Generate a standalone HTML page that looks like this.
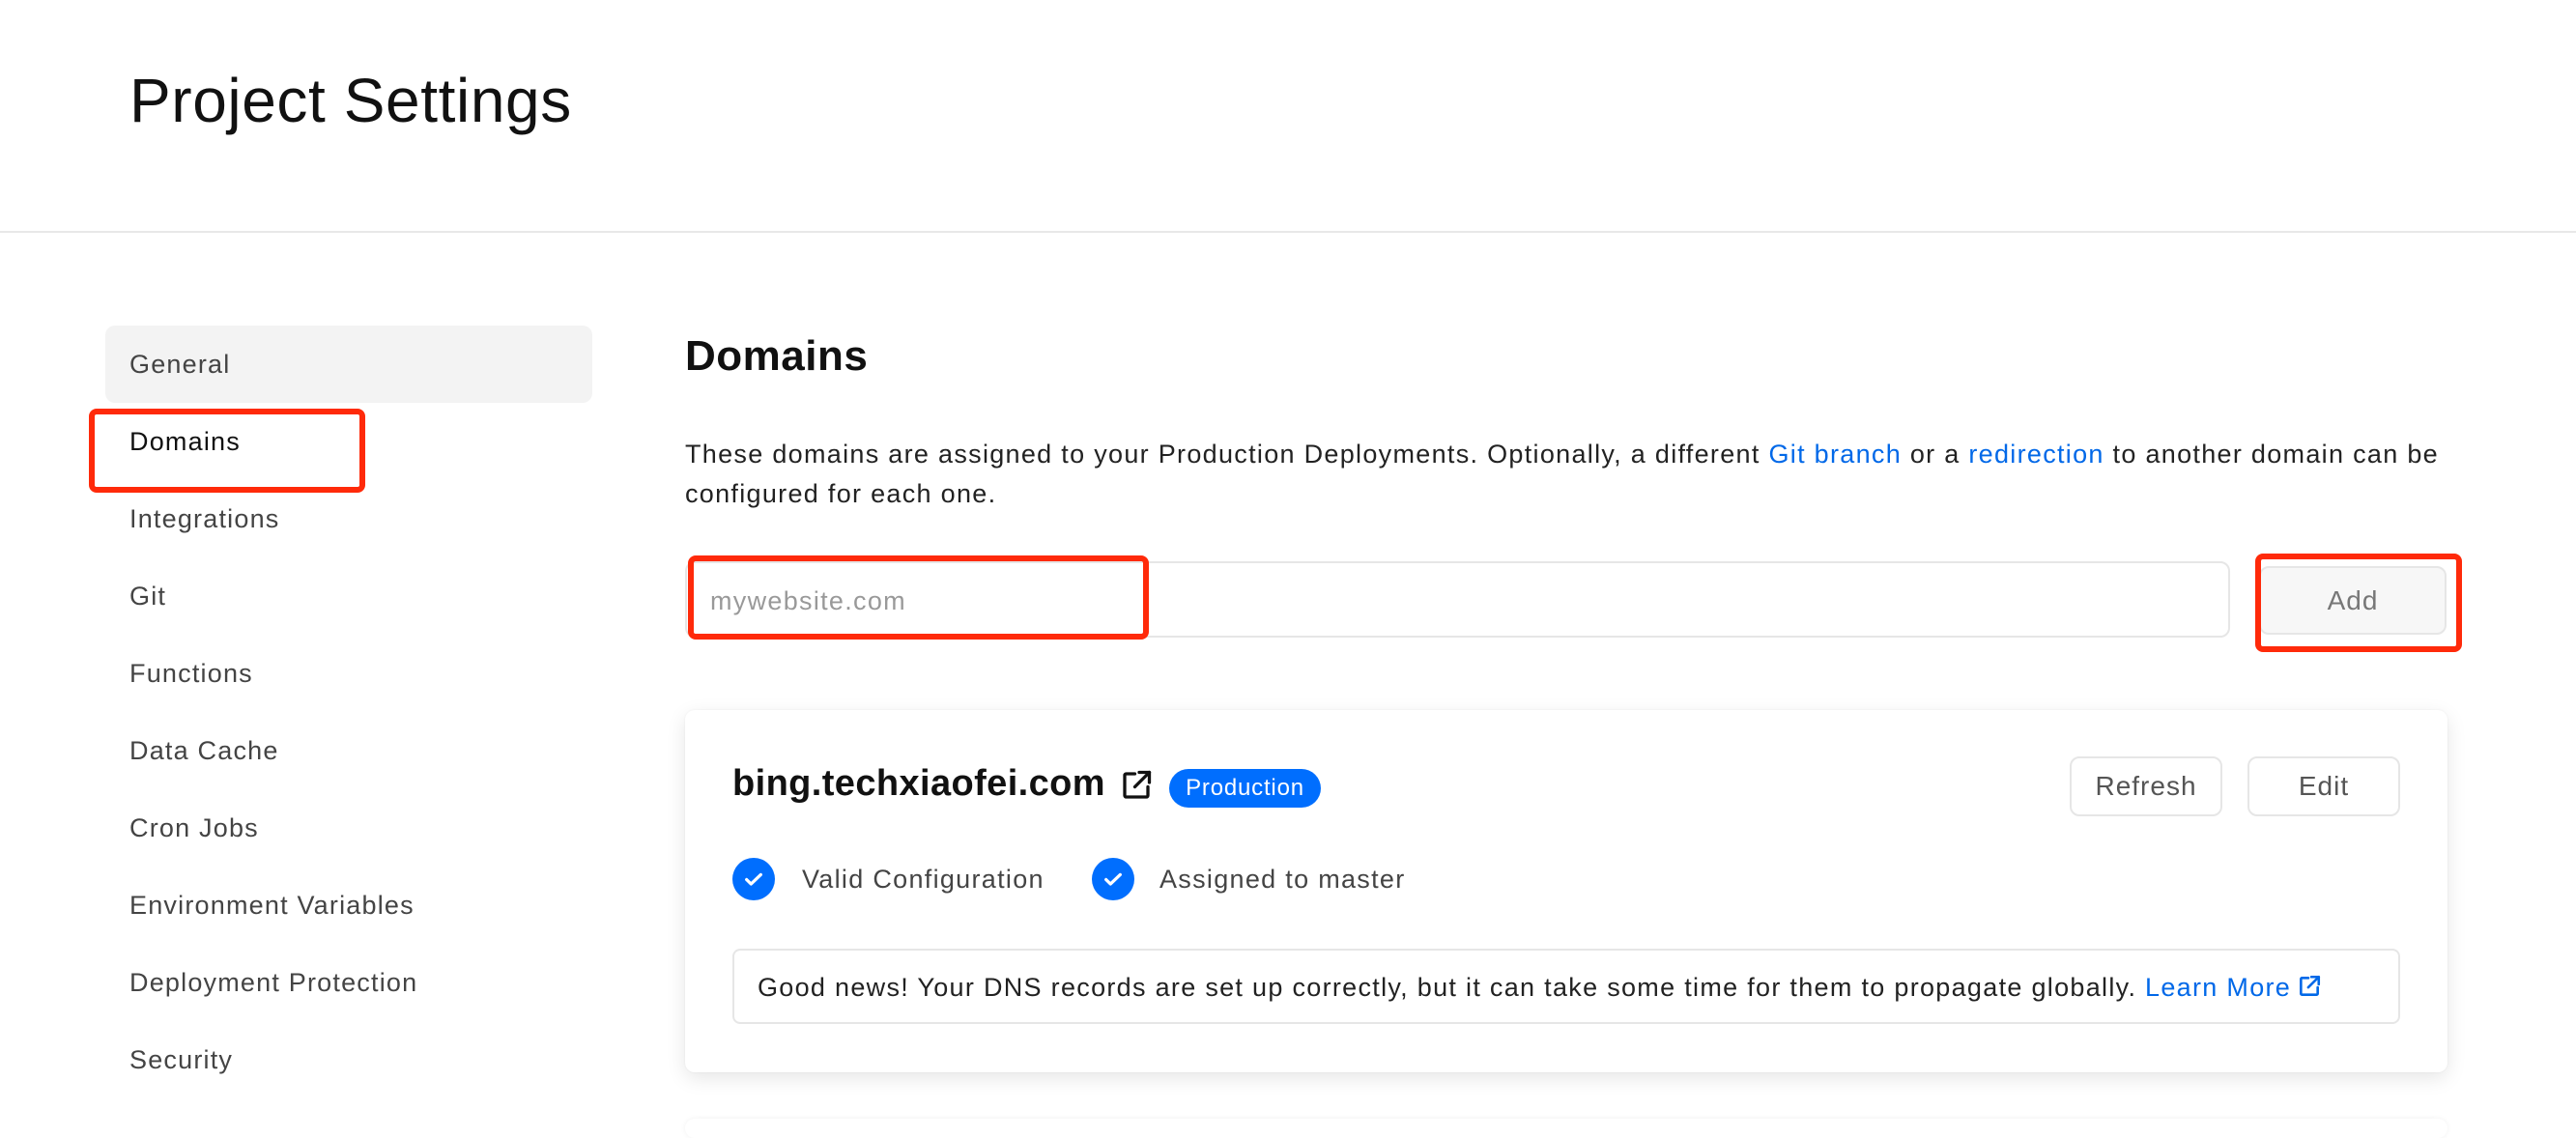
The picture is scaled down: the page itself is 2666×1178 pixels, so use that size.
<!DOCTYPE html>
<html><head><meta charset="utf-8"><style>
*{box-sizing:border-box;margin:0;padding:0}
body{width:2666px;height:1162px;overflow:hidden;background:#fff;font-family:"Liberation Sans",sans-serif;position:relative;color:#111}
.a{position:absolute}
.nav{left:134px;font-size:27px;color:#444;line-height:40px;letter-spacing:1.2px}
.red{border:6px solid #ff2a0a;border-radius:8px}
.btn{border:2px solid #e6e6e6;border-radius:10px;background:#fff;font-size:28px;color:#555;display:flex;align-items:center;justify-content:center;letter-spacing:1px}
.chk{width:44px;height:44px;border-radius:50%;background:#006efe;display:flex;align-items:center;justify-content:center}
.blue{color:#0068e8}
.t{font-size:27px;letter-spacing:1.3px;line-height:40px}
</style></head><body>
<div class="a" style="left:134px;top:66px;font-size:64px;color:#111;line-height:76px;letter-spacing:0.6px">Project Settings</div>
<div class="a" style="left:0;top:239px;width:2666px;height:2px;background:#e8e8e8"></div>

<div class="a" style="left:109px;top:337px;width:504px;height:80px;background:#f3f3f3;border-radius:10px"></div>
<div class="a nav" style="top:357px">General</div>
<div class="a nav" style="top:437px;color:#111">Domains</div>
<div class="a red" style="left:92px;top:423px;width:286px;height:87px"></div>
<div class="a nav" style="top:517px">Integrations</div>
<div class="a nav" style="top:597px">Git</div>
<div class="a nav" style="top:677px">Functions</div>
<div class="a nav" style="top:757px">Data Cache</div>
<div class="a nav" style="top:837px">Cron Jobs</div>
<div class="a nav" style="top:917px">Environment Variables</div>
<div class="a nav" style="top:997px">Deployment Protection</div>
<div class="a nav" style="top:1077px">Security</div>

<div class="a" style="left:709px;top:342px;font-size:44px;font-weight:bold;line-height:54px;letter-spacing:0.5px">Domains</div>
<div class="a t" style="left:709px;top:450px;width:1900px;line-height:41px;color:#222;white-space:nowrap">These domains are assigned to your Production Deployments. Optionally, a different <span class="blue">Git branch</span> or a <span class="blue">redirection</span> to another domain can be<br>configured for each one.</div>

<div class="a" style="left:709px;top:581px;width:1599px;height:79px;border:2px solid #e6e6e6;border-radius:10px"></div>
<div class="a t" style="left:735px;top:602px;color:#999">mywebsite.com</div>
<div class="a red" style="left:712px;top:575px;width:477px;height:87px"></div>
<div class="a btn" style="left:2338px;top:586px;width:194px;height:71px;background:#f7f7f7;color:#777">Add</div>
<div class="a red" style="left:2334px;top:573px;width:214px;height:102px"></div>

<div class="a" style="left:709px;top:735px;width:1824px;height:375px;border-radius:10px;background:#fff;box-shadow:0 6px 20px rgba(0,0,0,0.10),0 0 2px rgba(0,0,0,0.06)"></div>
<div class="a" style="left:758px;top:788px;font-size:38px;font-weight:bold;line-height:46px;letter-spacing:0.4px;white-space:nowrap">bing.techxiaofei.com</div>
<svg class="a" style="left:1158px;top:795px" width="36" height="36" viewBox="0 0 24 24" fill="none" stroke="#111" stroke-width="2.2" stroke-linecap="round" stroke-linejoin="round"><path d="M11 4H5a1 1 0 0 0-1 1v14a1 1 0 0 0 1 1h14a1 1 0 0 0 1-1v-6"/><path d="M14 3h7v7"/><path d="M21 3L11 13"/></svg>
<div class="a" style="left:1210px;top:796px;width:157px;height:40px;border-radius:20px;background:#006efe;color:#fff;font-size:24px;letter-spacing:0.8px;display:flex;align-items:center;justify-content:center">Production</div>
<div class="a btn" style="left:2142px;top:783px;width:158px;height:62px">Refresh</div>
<div class="a btn" style="left:2326px;top:783px;width:158px;height:62px">Edit</div>

<div class="a chk" style="left:758px;top:888px"><svg width="22" height="22" viewBox="0 0 24 24" fill="none" stroke="#fff" stroke-width="3.5" stroke-linecap="round" stroke-linejoin="round"><path d="M4 12.5l5 5L20 7"/></svg></div>
<div class="a t" style="left:830px;top:890px;color:#444">Valid Configuration</div>
<div class="a chk" style="left:1130px;top:888px"><svg width="22" height="22" viewBox="0 0 24 24" fill="none" stroke="#fff" stroke-width="3.5" stroke-linecap="round" stroke-linejoin="round"><path d="M4 12.5l5 5L20 7"/></svg></div>
<div class="a t" style="left:1200px;top:890px;color:#444">Assigned to master</div>

<div class="a" style="left:758px;top:982px;width:1726px;height:78px;border:2px solid #e6e6e6;border-radius:8px"></div>
<div class="a t" style="left:784px;top:1002px;color:#222;white-space:nowrap;letter-spacing:1.3px">Good news! Your DNS records are set up correctly, but it can take some time for them to propagate globally. <span class="blue">Learn More</span><svg style="margin-left:6px;vertical-align:-3px" width="26" height="26" viewBox="0 0 24 24" fill="none" stroke="#0068e8" stroke-width="2.4" stroke-linecap="round" stroke-linejoin="round"><path d="M11 4H5a1 1 0 0 0-1 1v14a1 1 0 0 0 1 1h14a1 1 0 0 0 1-1v-6"/><path d="M14 3h7v7"/><path d="M21 3L11 13"/></svg></div>
<div class="a" style="left:709px;top:1158px;width:1824px;height:20px;border-radius:10px;background:#fff;box-shadow:0 0 6px rgba(0,0,0,0.06)"></div>
</body></html>
